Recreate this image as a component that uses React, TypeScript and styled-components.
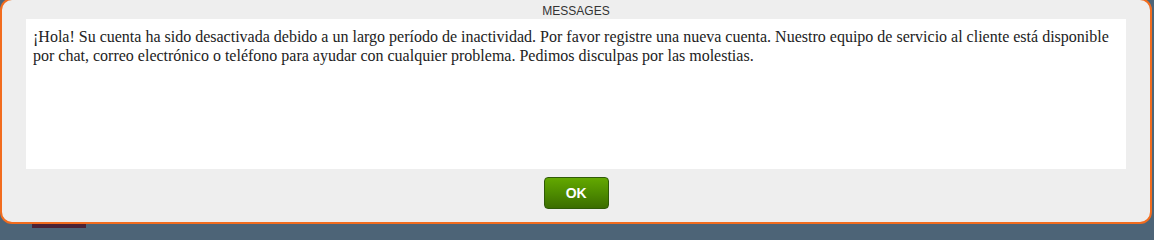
import React from 'react'
import styled, { createGlobalStyle } from 'styled-components'

const GlobalStyle = createGlobalStyle`
  html, body {
    margin: 0;
    padding: 0;
    background: #4d6477;
    overflow: hidden;
  }
`

const Page = styled.div`
  width: 1154px;
  height: 228px;
  overflow: hidden;
`

const Dialog = styled.div`
  margin-top: -2px;
  width: 1148px;
  height: 222px;
  border: 2px solid #f26c1e;
  border-radius: 12px;
  background: #eeeeee;
  display: flex;
  flex-direction: column;
  align-items: center;
`

const Title = styled.div`
  height: 19px;
  line-height: 22px;
  font-family: 'Liberation Sans', Arial, sans-serif;
  font-size: 12px;
  color: #333;
  text-align: center;
`

const Body = styled.div`
  align-self: stretch;
  margin: 0 24px;
  height: 150px;
  box-sizing: border-box;
  padding: 8px 7px;
  background: #fff;
  font-family: 'Liberation Serif', 'Times New Roman', serif;
  font-size: 16px;
  line-height: 19px;
  color: #222;
`

const Footer = styled.div`
  padding-top: 8px;
  display: flex;
  justify-content: center;
`

const OkButton = styled.button`
  width: 65px;
  height: 32px;
  border: 1px solid #2f5a07;
  border-radius: 4px;
  background: linear-gradient(to bottom, #63a800 0%, #4e8c00 50%, #3b6d00 100%);
  color: #fff;
  font-family: 'Liberation Sans', Arial, sans-serif;
  font-weight: bold;
  font-size: 14px;
  letter-spacing: -0.3px;
  cursor: pointer;
`

const Under = styled.div`
  display: flex;
  padding-left: 32px;
`

const UnderTab = styled.div`
  width: 54px;
  height: 6px;
  background: #4a2236;
`

export default function App() {
  return (
    <Page>
      <GlobalStyle />
      <Dialog>
        <Title>MESSAGES</Title>
        <Body>
          ¡Hola! Su cuenta ha sido desactivada debido a un largo período de inactividad. Por favor registre una nueva
          cuenta. Nuestro equipo de servicio al cliente está disponible por chat, correo electrónico o teléfono para
          ayudar con cualquier problema. Pedimos disculpas por las molestias.
        </Body>
        <Footer>
          <OkButton>OK</OkButton>
        </Footer>
      </Dialog>
      <Under>
        <UnderTab />
      </Under>
    </Page>
  )
}
